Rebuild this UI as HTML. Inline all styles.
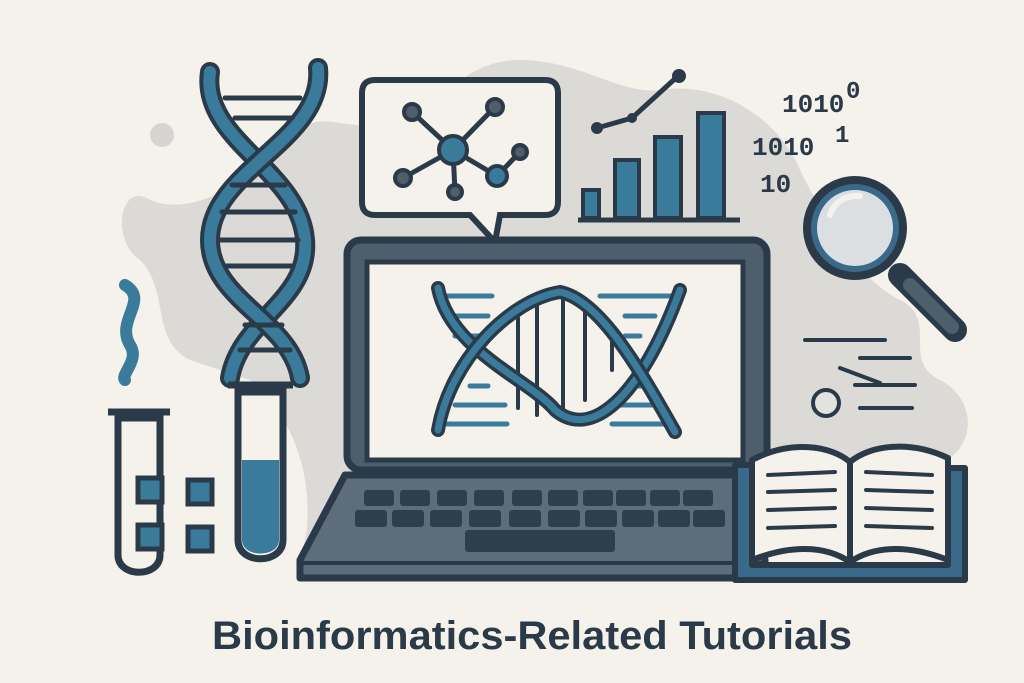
<!DOCTYPE html>
<html><head><meta charset="utf-8"><style>
html,body{margin:0;padding:0;background:#f5f2ec;}
svg{display:block}
</style></head><body>
<svg width="1024" height="683" viewBox="0 0 1024 683" xmlns="http://www.w3.org/2000/svg">
<rect width="1024" height="683" fill="#f5f2ec"/>
<path d="M150 200 C120 180 110 240 140 260 C170 290 150 340 190 360 L250 380 C300 420 320 500 300 560 L740 560 C780 520 850 470 920 470 C980 460 980 400 940 380 C900 360 940 320 900 300 C860 280 830 230 800 170 C780 120 720 80 660 90 C620 95 580 60 520 60 C460 60 440 110 400 120 C350 140 320 100 290 140 C260 170 200 220 150 200Z" fill="#dcdad6"/>
<circle cx="162" cy="135" r="12" fill="#d6d4d0"/>
<g fill="none" stroke-linecap="round">
<path d="M210 72 C200 140 300 170 305 240 C310 300 240 320 230 378" stroke="#2b3a48" stroke-width="20"/>
<path d="M210 72 C200 140 300 170 305 240 C310 300 240 320 230 378" stroke="#3a7a9a" stroke-width="12"/>
<path d="M318 68 C325 140 210 170 210 240 C210 300 290 320 300 378" stroke="#2b3a48" stroke-width="20"/>
<path d="M318 68 C325 140 210 170 210 240 C210 300 290 320 300 378" stroke="#3a7a9a" stroke-width="12"/>
<g stroke="#2b3a48" stroke-width="5">
<line x1="225" y1="98" x2="300" y2="98"/><line x1="235" y1="118" x2="292" y2="118"/>
<line x1="232" y1="185" x2="285" y2="185"/><line x1="222" y1="212" x2="295" y2="212"/>
<line x1="220" y1="240" x2="298" y2="240"/><line x1="225" y1="266" x2="292" y2="266"/>
<line x1="245" y1="325" x2="282" y2="325"/><line x1="240" y1="350" x2="290" y2="350"/>
</g>
<path d="M125 285 C150 300 115 320 130 345 C140 360 120 375 125 380" stroke="#3a7a9a" stroke-width="12"/>
</g>
<g stroke="#2b3a48" stroke-width="7" fill="#f5f2ec">
<path d="M118 418 L118 555 C118 578 160 578 160 555 L160 418Z"/>
<line x1="108" y1="412" x2="170" y2="412"/>
<path d="M238 392 L238 540 C238 565 283 565 283 540 L283 392Z"/>
<line x1="228" y1="385" x2="293" y2="385"/>
</g>
<path d="M242 460 L279 460 L279 540 C279 558 242 558 242 540Z" fill="#3a7a9a"/>
<g fill="#3a7a9a" stroke="#2b3a48" stroke-width="5">
<rect x="138" y="478" width="24" height="24"/><rect x="188" y="480" width="24" height="24"/>
<rect x="138" y="525" width="24" height="24"/><rect x="188" y="527" width="24" height="24"/>
</g>
<path d="M375 80 L545 80 Q558 80 558 93 L558 202 Q558 215 545 215 L500 215 L495 242 L470 215 L375 215 Q362 215 362 202 L362 93 Q362 80 375 80Z" fill="#f5f2ec" stroke="#2b3a48" stroke-width="6"/>
<g stroke="#2b3a48" stroke-width="5">
<line x1="412" y1="112" x2="453" y2="150"/><line x1="495" y1="107" x2="453" y2="150"/>
<line x1="403" y1="178" x2="453" y2="150"/><line x1="455" y1="192" x2="453" y2="150"/>
<line x1="497" y1="176" x2="453" y2="150"/><line x1="520" y1="152" x2="497" y2="176"/>
</g>
<g stroke="#2b3a48" stroke-width="4">
<circle cx="453" cy="150" r="14" fill="#3a7a9a"/><circle cx="497" cy="176" r="10" fill="#3a7a9a"/>
<circle cx="412" cy="112" r="8" fill="#4f5e6c"/><circle cx="495" cy="107" r="8" fill="#4f5e6c"/>
<circle cx="403" cy="178" r="8" fill="#4f5e6c"/><circle cx="455" cy="192" r="7" fill="#4f5e6c"/>
<circle cx="520" cy="152" r="7" fill="#4f5e6c"/>
</g>
<g stroke="#2b3a48" stroke-width="4" fill="#3a7a9a">
<rect x="583" y="190" width="16" height="28"/><rect x="615" y="160" width="24" height="58"/>
<rect x="655" y="137" width="26" height="81"/><rect x="698" y="113" width="26" height="105"/>
</g>
<line x1="578" y1="220" x2="740" y2="220" stroke="#2b3a48" stroke-width="5"/>
<path d="M597 128 L632 118 L678 76" fill="none" stroke="#2b3a48" stroke-width="5"/>
<circle cx="597" cy="128" r="6" fill="#2b3a48"/><circle cx="632" cy="118" r="5" fill="#2b3a48"/><circle cx="679" cy="76" r="7" fill="#2b3a48"/>
<g font-family="Liberation Mono, monospace" font-weight="bold" font-size="26" fill="#2b3a48">
<text x="782" y="112">1010</text><text x="752" y="155">1010</text><text x="760" y="192">10</text>
<text x="846" y="98" font-size="24">0</text><text x="835" y="142" font-size="24">1</text>
</g>
<line x1="900" y1="275" x2="955" y2="330" stroke="#2b3a48" stroke-width="24" stroke-linecap="round"/>
<line x1="910" y1="285" x2="952" y2="327" stroke="#4f5e6c" stroke-width="14" stroke-linecap="round"/>
<circle cx="855" cy="228" r="52" fill="#2b3a48"/>
<circle cx="855" cy="228" r="44" fill="#3a6a8a"/>
<circle cx="855" cy="228" r="38" fill="#dcdfe2"/>
<path d="M830 215 C835 200 848 195 860 196" stroke="#f5f2ec" stroke-width="6" fill="none" stroke-linecap="round"/>
<g stroke="#2b3a48" stroke-width="4" stroke-linecap="round">
<line x1="805" y1="340" x2="885" y2="340"/><line x1="860" y1="358" x2="910" y2="358"/>
<line x1="840" y1="368" x2="880" y2="383"/><line x1="855" y1="385" x2="915" y2="385"/>
<line x1="860" y1="408" x2="912" y2="408"/>
</g>
<circle cx="826" cy="403" r="13" fill="#e4e2de" stroke="#2b3a48" stroke-width="4"/>
<rect x="347" y="240" width="420" height="230" rx="14" fill="#4f5e6c" stroke="#2b3a48" stroke-width="7"/>
<rect x="367" y="262" width="376" height="198" fill="#f5f2ec" stroke="#2b3a48" stroke-width="5"/>
<path d="M345 475 L742 475 L765 560 L765 578 L300 578 L300 560Z" fill="#5e6d7b" stroke="#2b3a48" stroke-width="7" stroke-linejoin="round"/>
<line x1="303" y1="563" x2="762" y2="563" stroke="#2b3a48" stroke-width="4"/>
<g fill="#2f3e4c">
<rect x="364" y="490" width="30" height="16" rx="3"/><rect x="400" y="490" width="30" height="16" rx="3"/><rect x="437" y="490" width="30" height="16" rx="3"/><rect x="474" y="490" width="30" height="16" rx="3"/><rect x="512" y="490" width="30" height="16" rx="3"/><rect x="548" y="490" width="30" height="16" rx="3"/><rect x="583" y="490" width="30" height="16" rx="3"/><rect x="616" y="490" width="30" height="16" rx="3"/><rect x="650" y="490" width="30" height="16" rx="3"/><rect x="683" y="490" width="30" height="16" rx="3"/>
<rect x="355" y="510" width="32" height="17" rx="3"/><rect x="392" y="510" width="32" height="17" rx="3"/><rect x="430" y="510" width="32" height="17" rx="3"/><rect x="469" y="510" width="32" height="17" rx="3"/><rect x="509" y="510" width="32" height="17" rx="3"/><rect x="548" y="510" width="32" height="17" rx="3"/><rect x="585" y="510" width="32" height="17" rx="3"/><rect x="622" y="510" width="32" height="17" rx="3"/><rect x="658" y="510" width="32" height="17" rx="3"/><rect x="693" y="510" width="32" height="17" rx="3"/>
<rect x="465" y="530" width="150" height="22" rx="3"/>
</g>
<g stroke-linecap="round" fill="none">
<g stroke="#3a7a9a" stroke-width="5">
<line x1="440" y1="296" x2="492" y2="296"/><line x1="445" y1="316" x2="488" y2="316"/><line x1="455" y1="336" x2="478" y2="336"/>
<line x1="470" y1="386" x2="488" y2="386"/><line x1="455" y1="405" x2="505" y2="405"/><line x1="445" y1="424" x2="507" y2="424"/>
<line x1="600" y1="296" x2="672" y2="296"/><line x1="625" y1="316" x2="655" y2="316"/><line x1="625" y1="336" x2="640" y2="336"/>
<line x1="628" y1="386" x2="650" y2="386"/><line x1="620" y1="405" x2="660" y2="405"/><line x1="612" y1="424" x2="670" y2="424"/>
</g>
<g stroke="#2b3a48" stroke-width="4">
<line x1="518" y1="318" x2="518" y2="408"/><line x1="537" y1="305" x2="537" y2="415"/><line x1="563" y1="292" x2="563" y2="418"/>
<line x1="585" y1="300" x2="585" y2="400"/><line x1="612" y1="340" x2="612" y2="370"/>
</g>
<path d="M438 288 C450 350 530 380 555 410 C590 440 640 400 680 290" stroke="#2b3a48" stroke-width="14"/>
<path d="M438 288 C450 350 530 380 555 410 C590 440 640 400 680 290" stroke="#3a7a9a" stroke-width="7"/>
<path d="M438 430 C450 360 510 300 560 292 C600 300 640 370 675 432" stroke="#2b3a48" stroke-width="14"/>
<path d="M438 430 C450 360 510 300 560 292 C600 300 640 370 675 432" stroke="#3a7a9a" stroke-width="7"/>
</g>
<path d="M735 465 L735 580 L965 580 L965 468 L948 468 L948 565 L752 565 L752 465Z" fill="#3a6a8a" stroke="#2b3a48" stroke-width="6" stroke-linejoin="round"/>
<path d="M752 460 C790 440 830 445 850 462 L850 562 C825 545 790 545 752 560Z" fill="#f5f2ec" stroke="#2b3a48" stroke-width="6" stroke-linejoin="round"/>
<path d="M850 462 C870 445 910 440 948 458 L948 560 C910 545 875 545 850 562Z" fill="#f5f2ec" stroke="#2b3a48" stroke-width="6" stroke-linejoin="round"/>
<g stroke="#2b3a48" stroke-width="4" stroke-linecap="round">
<line x1="768" y1="475" x2="835" y2="472"/><line x1="768" y1="492" x2="835" y2="490"/><line x1="768" y1="510" x2="835" y2="508"/><line x1="768" y1="528" x2="835" y2="526"/>
<line x1="866" y1="472" x2="932" y2="475"/><line x1="866" y1="490" x2="932" y2="492"/><line x1="866" y1="508" x2="932" y2="510"/><line x1="866" y1="526" x2="932" y2="528"/>
</g>
<text x="532" y="649" text-anchor="middle" font-family="Liberation Sans, sans-serif" font-weight="bold" font-size="40" textLength="640" lengthAdjust="spacingAndGlyphs" fill="#2b3a48">Bioinformatics-Related Tutorials</text>
</svg>
</body></html>
